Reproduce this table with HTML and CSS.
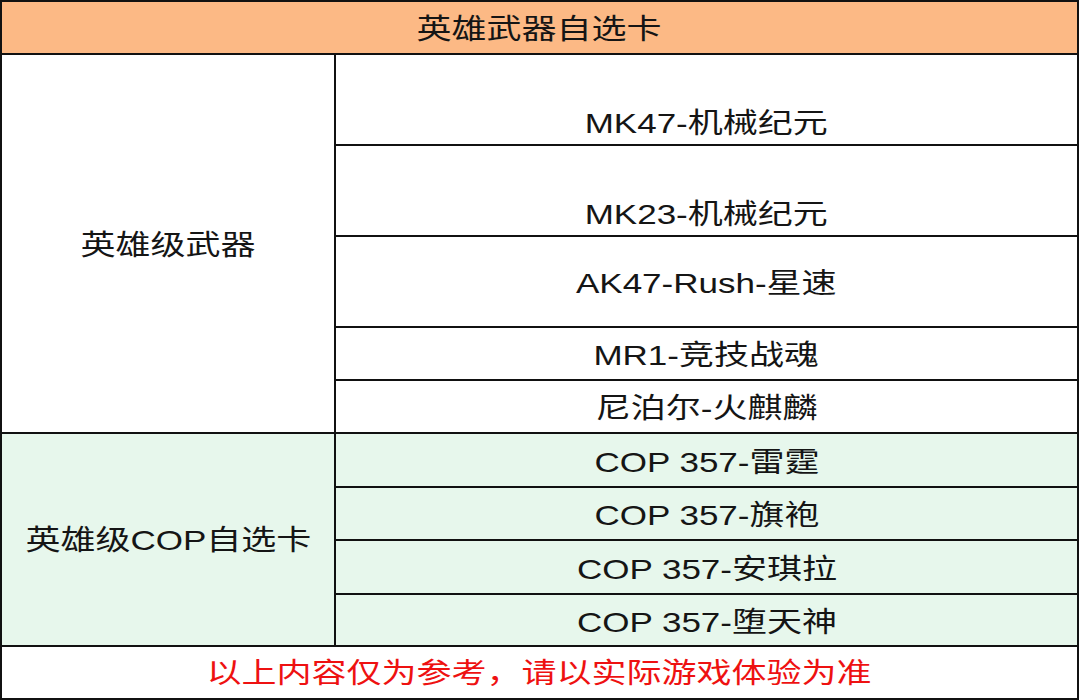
FILE: index.html
```html
<!DOCTYPE html>
<html lang="zh-CN">
<head>
<meta charset="utf-8">
<title>英雄武器自选卡</title>
<link rel="stylesheet" href="styles.css">
</head>
<body>
<div class="table">
  <div class="cell head"><span class="t">英雄武器自选卡</span></div>
  <div class="cell label label-hero"><span class="t">英雄级武器</span></div>
  <div class="cell item tall low"><span class="t">MK47-机械纪元</span></div>
  <div class="cell item tall low"><span class="t">MK23-机械纪元</span></div>
  <div class="cell item tall"><span class="t">AK47-Rush-星速</span></div>
  <div class="cell item"><span class="t">MR1-竞技战魂</span></div>
  <div class="cell item"><span class="t">尼泊尔-火麒麟</span></div>
  <div class="cell label green label-cop"><span class="t">英雄级COP自选卡</span></div>
  <div class="cell item green"><span class="t">COP 357-雷霆</span></div>
  <div class="cell item green"><span class="t">COP 357-旗袍</span></div>
  <div class="cell item green"><span class="t">COP 357-安琪拉</span></div>
  <div class="cell item green"><span class="t">COP 357-堕天神</span></div>
  <div class="cell foot"><span class="t">以上内容仅为参考，请以实际游戏体验为准</span></div>
</div>
</body>
</html>
```
FILE: styles.css
```css
html, body {
  margin: 0;
  padding: 0;
  background: #ffffff;
}
.table {
  width: 1079px;
  height: 700px;
  box-sizing: border-box;
  padding: 2px;
  background: #111111;
  display: grid;
  grid-template-columns: 332px 741px;
  grid-template-rows: 51px 89px 89px 89px 51px 51px 52px 51px 52px 50px 51px;
  gap: 2px;
  font-family: "Liberation Sans", "Noto Sans CJK SC", sans-serif;
  font-size: 28px;
  color: #151515;
}
.cell {
  background: #ffffff;
  display: flex;
  align-items: center;
  justify-content: center;
  box-sizing: border-box;
  overflow: hidden;
  padding-top: 5px;
}
.t {
  display: inline-block;
  white-space: nowrap;
  line-height: 34px;
  transform: scaleX(1.25);
}
.head {
  grid-column: 1 / 3;
  background: #fcb985;
}
.label-hero {
  grid-column: 1;
  grid-row: 2 / 7;
  padding-top: 4px;
}
.label-cop {
  grid-column: 1;
  grid-row: 7 / 11;
  padding-top: 2px;
}
.item {
  grid-column: 2;
}
.low {
  padding-top: 48px;
}
.green {
  background: #e7f7ec;
}
.foot {
  grid-column: 1 / 3;
  color: #ee1111;
  padding-top: 3px;
}
```
